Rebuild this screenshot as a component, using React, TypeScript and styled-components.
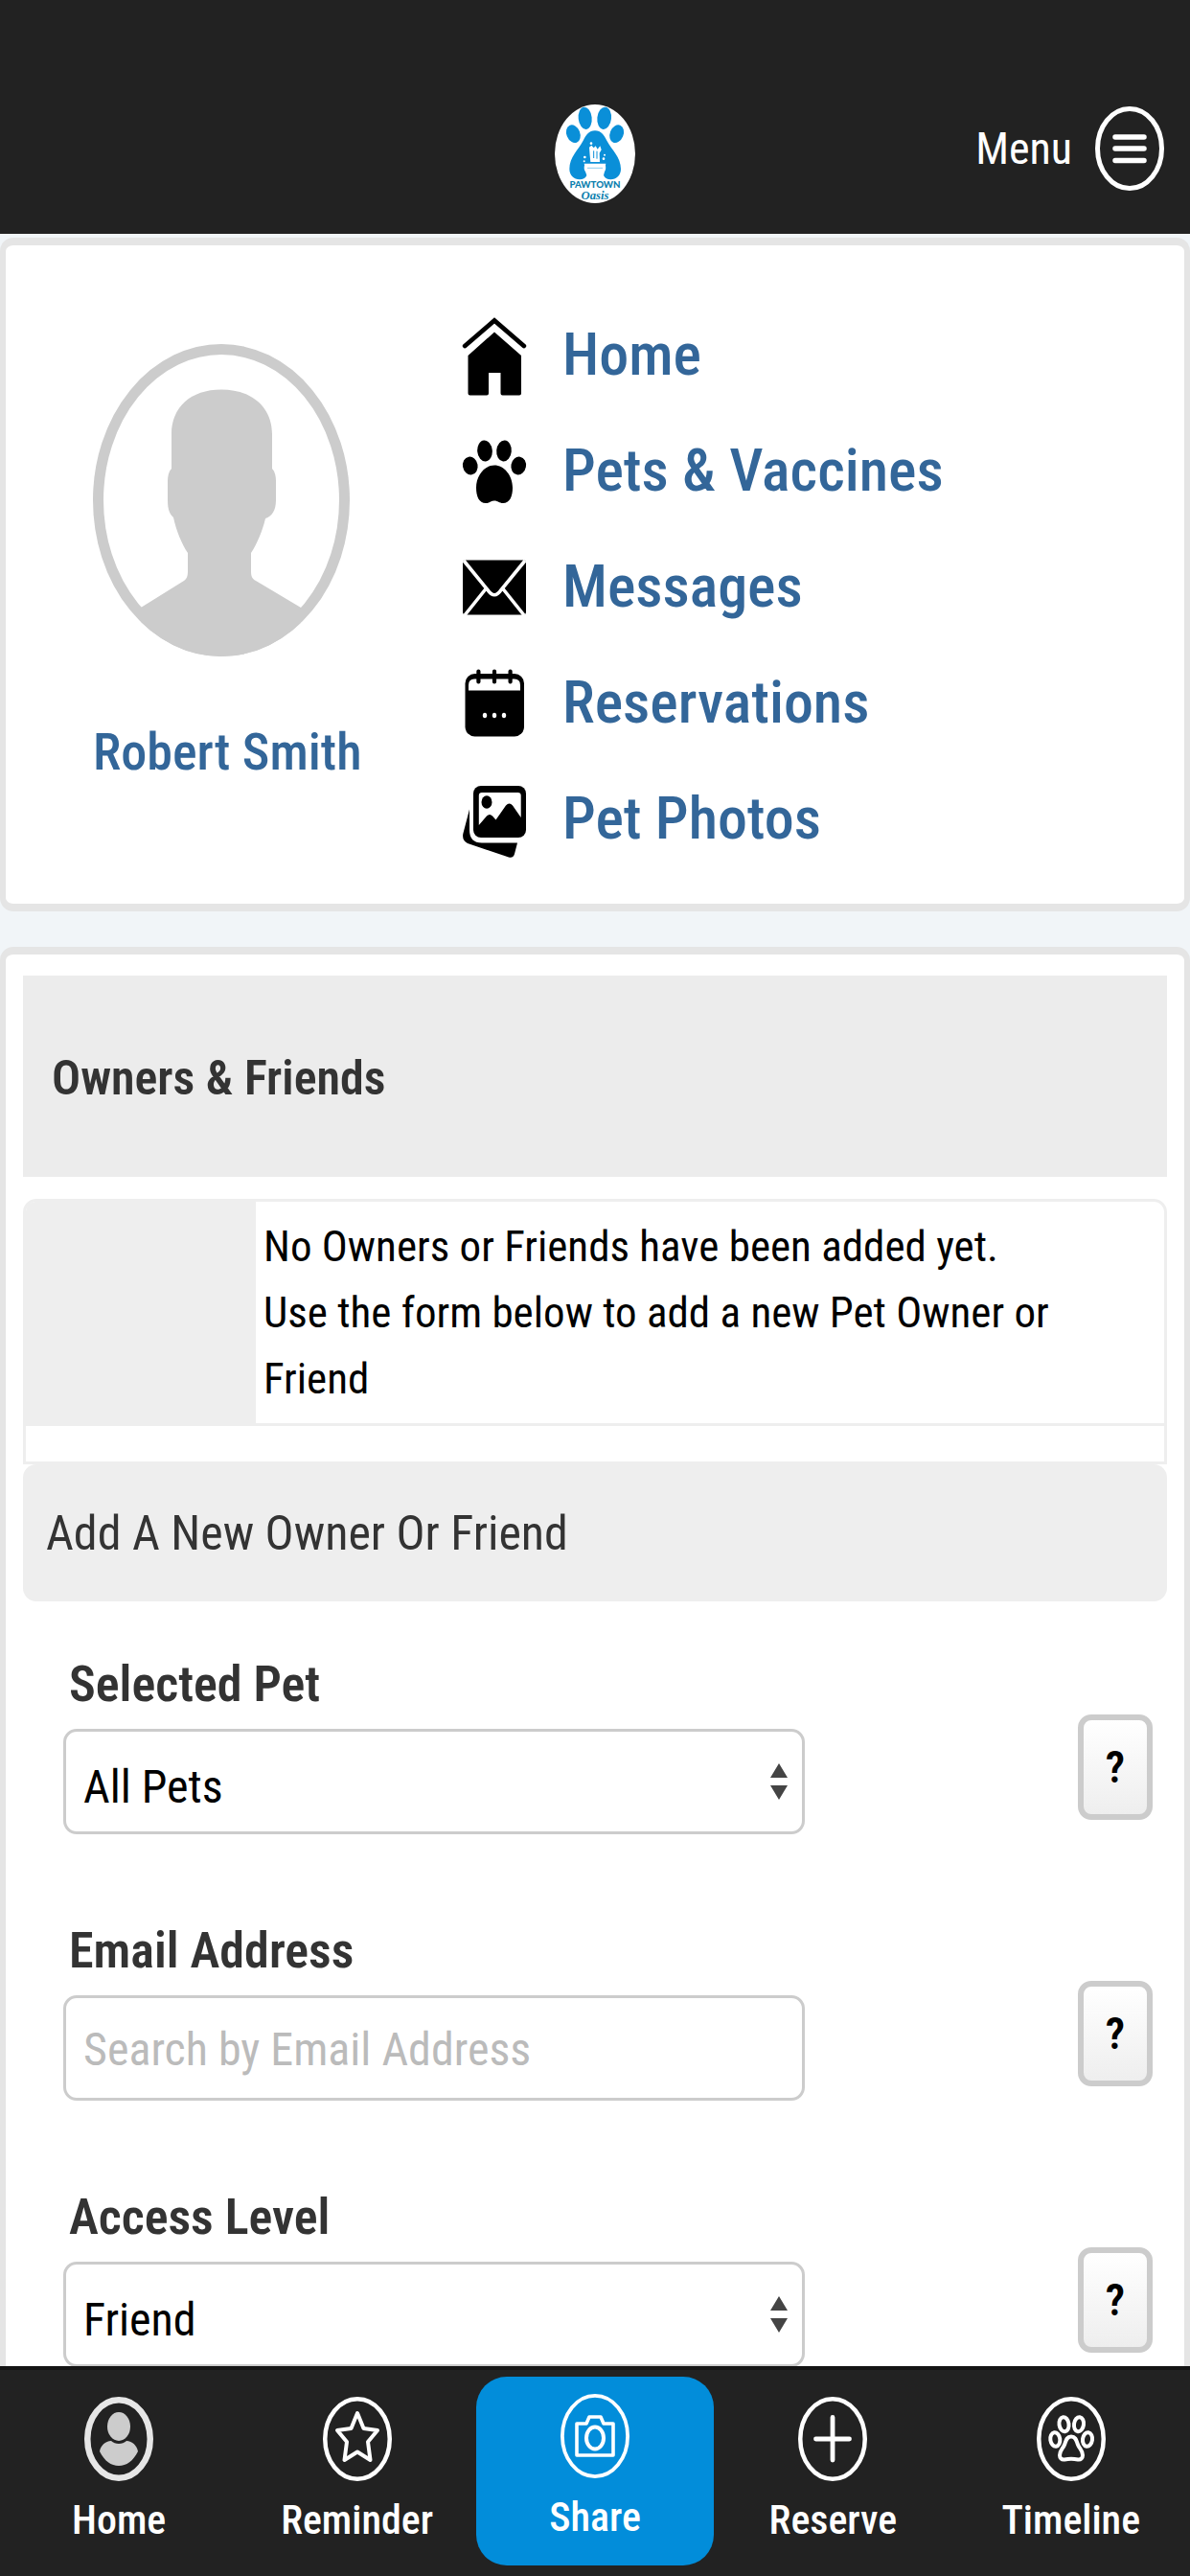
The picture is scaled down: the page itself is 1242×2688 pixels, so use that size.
import React from 'react';
import styled, { createGlobalStyle } from 'styled-components';

const GlobalStyle = createGlobalStyle`
  *, *::before, *::after { box-sizing: border-box; }
  body {
    margin: 0;
    background: #f1f5f8;
    color: #000;
    font-family: "Roboto Condensed", Roboto, "Liberation Sans", sans-serif;
  }
  button, input, select { font-family: inherit; }
`;

const Page = styled.div`
  display: flex;
  flex-direction: column;
  min-height: 100vh;
`;

/* Top bar */

const TopBar = styled.header`
  display: grid;
  grid-template-columns: 1fr auto 1fr;
  align-items: start;
  height: 244px;
  padding: 109px 27px 0;
  background: #222;
`;

const LogoLink = styled.a`
  display: block;
  grid-column: 2;
  line-height: 0;
`;

const MenuButton = styled.button`
  display: flex;
  align-items: center;
  justify-self: end;
  gap: 24px;
  padding: 2px 0 0;
  border: 0;
  background: none;
  color: #fff;
  font-size: 46px;
  line-height: 60px;
  cursor: pointer;
`;

/* Cards */

const Card = styled.section`
  border: solid #e5e5e5;
  border-width: 8px 6px;
  border-radius: 14px;
  background: #fff;
`;

const ProfileCard = styled(Card)`
  display: flex;
  align-items: flex-start;
  gap: 110px;
  margin-top: 4px;
  padding: 53px 24px 29px 91px;
`;

const Profile = styled.a`
  display: flex;
  flex-direction: column;
  align-items: flex-start;
  gap: 70px;
  width: 276px;
  padding-top: 50px;
  color: #369;
  font-size: 54px;
  font-weight: 500;
  line-height: 60px;
  text-decoration: none;
  white-space: nowrap;
`;

const NavList = styled.ul`
  margin: 0;
  padding: 0;
  list-style: none;
`;

const NavLink = styled.a`
  display: flex;
  align-items: center;
  gap: 38px;
  height: 121px;
  color: #369;
  font-size: 62px;
  font-weight: 500;
  text-decoration: none;
`;

const OwnersCard = styled(Card)`
  flex: 1;
  margin-top: 37px;
  padding: 22px 18px 200px;
`;

const CardTitle = styled.h1`
  display: flex;
  align-items: center;
  height: 210px;
  margin: 0 0 23px;
  padding: 4px 30px 0;
  background: #ececec;
  color: #333;
  font-size: 50px;
  font-weight: 600;
`;

const Notice = styled.div`
  border: 3px solid #eee;
  border-radius: 14px 14px 0 0;
`;

const NoticeRow = styled.div`
  display: grid;
  grid-template-columns: 240px 1fr;
  border-bottom: 3px solid #eee;
`;

const NoticeMark = styled.div`
  border-radius: 10px 0 0 0;
  background: #eee;
`;

const NoticeText = styled.p`
  margin: 0;
  padding: 12px 48px 12px 8px;
  font-size: 45px;
  line-height: 69px;
`;

const NoticeFoot = styled.div`
  height: 37px;
`;

const FormTitle = styled.h2`
  display: flex;
  align-items: center;
  height: 143px;
  margin: 0;
  padding: 0 24px;
  border-radius: 14px;
  background: #eee;
  color: #333;
  font-size: 50px;
  font-weight: 400;
`;

const Form = styled.form`
  display: flex;
  flex-direction: column;
  gap: 92px;
  padding: 57px 15px 0 42px;
`;

const Field = styled.div`
  display: flex;
  align-items: flex-end;
  justify-content: space-between;
  gap: 24px;
`;

const FieldMain = styled.div`
  flex: 0 1 774px;
`;

const Label = styled.label`
  display: block;
  margin-bottom: 16px;
  padding-left: 6px;
  color: #333;
  font-size: 52px;
  font-weight: 600;
  line-height: 60px;
`;

const TextInput = styled.input`
  display: block;
  width: 100%;
  height: 110px;
  padding: 2px 19px 0 18px;
  border: 3px solid #ccc;
  border-radius: 14px;
  background: #fff;
  color: #000;
  font-size: 48px;
  &::placeholder { color: #bbb; opacity: 1; }
`;

const SelectWrap = styled.div`
  position: relative;
`;

const Select = styled.select`
  display: block;
  width: 100%;
  height: 110px;
  padding: 10px 60px 0 18px;
  border: 3px solid #ccc;
  border-radius: 14px;
  background: #fff;
  color: #000;
  font-size: 48px;
  appearance: none;
`;

const SelectArrows = styled.svg`
  position: absolute;
  top: 36px;
  right: 18px;
  pointer-events: none;
`;

const HelpButton = styled.button`
  flex: none;
  width: 78px;
  height: 110px;
  margin-bottom: 15px;
  padding: 0;
  border: 6px solid #ccc;
  border-radius: 14px;
  background: linear-gradient(#fff, #eee);
  color: #000;
  font-size: 46px;
  font-weight: 600;
  cursor: pointer;
`;

/* Bottom bar */

const TabBar = styled.nav`
  position: fixed;
  right: 0;
  bottom: 0;
  left: 0;
  display: grid;
  grid-template-columns: repeat(5, 1fr);
  height: 219px;
  padding: 7px 0 11px;
  border-top: 4px solid #141414;
  background: #222;
`;

const Tab = styled.a<{ $primary?: boolean }>`
  display: flex;
  flex-direction: column;
  align-items: center;
  gap: 16px;
  padding-top: ${(p) => (p.$primary ? 18 : 21)}px;
  border-radius: 32px;
  background: ${(p) => (p.$primary ? '#028dda' : 'transparent')};
  color: #fff;
  font-size: 42px;
  font-weight: 500;
  line-height: 50px;
  text-decoration: none;
`;

/* Drawings */

const Logo = () => (
  <svg width="84" height="103" viewBox="0 0 252 309" role="img" aria-label="Pawtown Oasis">
    <ellipse cx="126" cy="154.500" rx="126" ry="154.500" fill="#fff" />
    <g fill="#0a8fd8">
      <ellipse cx="95" cy="43" rx="21" ry="35" transform="rotate(-6 95 43)" />
      <ellipse cx="155" cy="43" rx="22" ry="35" transform="rotate(6 155 43)" />
      <ellipse cx="58" cy="92" rx="21" ry="29" transform="rotate(-22 58 92)" />
      <ellipse cx="194" cy="92" rx="21" ry="29" transform="rotate(22 194 92)" />
      <path d="M126 82C107 82 98 96 89 113C74 142 46 164 46 202C46 222 60 235 78 235C88 235 96 231 100 222L96 210C91 206 91 190 96 186H156C161 190 161 206 156 210L153 222C157 231 165 235 175 235C193 235 207 222 207 202C207 164 178 142 163 113C154 96 145 82 126 82Z" />
    </g>
    <g fill="#fff">
      <path d="M108 134L115 128L122 136L128 130L134 140L142 130L146 142L140 152L141 180H112L110 160Z" />
      <circle cx="114" cy="122" r="4" />
      <circle cx="94" cy="165" r="4" />
      <circle cx="153" cy="170" r="4" />
      <circle cx="92" cy="178" r="3" />
      <circle cx="156" cy="158" r="3" />
      <path d="M92 185H160L154 212H98Z" />
    </g>
    <path d="M122 145V168M132 146V170" stroke="#0a8fd8" strokeWidth="3" />
    <path d="M102 199H150" stroke="#8fcdee" strokeWidth="3" />
    <text x="126" y="262" textAnchor="middle" fontSize="29" fontWeight="900" fontFamily="Lato, sans-serif" fill="#0c7fae">PAWTOWN</text>
    <text x="126" y="296" textAnchor="middle" fontSize="38" fontWeight="700" fontStyle="italic" fontFamily="Liberation Serif, serif" fill="#0c7fae">Oasis</text>
  </svg>
);

const MenuIcon = () => (
  <svg width="72" height="88" viewBox="0 0 72 88" fill="none" stroke="#fff" strokeLinecap="round" aria-hidden="true">
    <ellipse cx="36" cy="44" rx="33.500" ry="41.500" strokeWidth="5" />
    <path d="M21 32H51M21 44H51M21 56.500H51" strokeWidth="5.500" />
  </svg>
);

const Avatar = () => (
  <svg width="268" height="326" viewBox="0 0 268 326" aria-hidden="true">
    <defs>
      <clipPath id="avatar-round"><ellipse cx="134" cy="163" rx="134" ry="163" /></clipPath>
    </defs>
    <ellipse cx="134" cy="163" rx="128.500" ry="157.500" fill="#fff" stroke="#ccc" strokeWidth="11" />
    <path
      clipPath="url(#avatar-round)"
      fill="#ccc"
      d="M134 47.500C166 47.500 187 66 187 94V130C190 133 191 138 191 143V163C191 173 187 180 180 182C177 195 171 209 165 218V237C165 242 166 245 170 247L217 275V326H50V275L95 247C98 245 99 242 99 237V218C93 209 87 195 84 181C80 177 78 173 78 163V143C78 138 79 133 82 130V94C82 66 102 47.500 134 47.500Z"
    />
  </svg>
);

const NavIcon = ({ children }: { children: React.ReactNode }) => (
  <svg width="66" height="84" viewBox="0 0 66 84" overflow="visible" aria-hidden="true">{children}</svg>
);

const HomeIcon = () => (
  <NavIcon>
    <path d="M2.200 33L33 6.500L63.800 33" fill="none" stroke="#000" strokeWidth="4.800" strokeLinecap="round" />
    <path d="M33 18.500L61 43V82.500Q61 84.500 59 84.500H41.500Q39.500 84.500 39.500 82.500V61H27V82.500Q27 84.500 25 84.500H7.500Q5.500 84.500 5.500 82.500V43Z" />
  </NavIcon>
);

const PawIcon = () => (
  <NavIcon>
    <ellipse cx="23" cy="21.500" rx="7.800" ry="11" transform="rotate(-5 23 21.500)" />
    <ellipse cx="43" cy="21.500" rx="7.800" ry="11" transform="rotate(5 43 21.500)" />
    <ellipse cx="7.800" cy="37" rx="7.800" ry="9.500" transform="rotate(-10 7.800 37)" />
    <ellipse cx="58.200" cy="37" rx="7.800" ry="9.500" transform="rotate(10 58.200 37)" />
    <path d="M33 36.500C43 36.500 52 47 52 60C52 69 49 76 42 76C38 76 36.500 73.500 33 73.500C29.500 73.500 28 76 24 76C17 76 14 69 14 60C14 47 23 36.500 33 36.500Z" />
  </NavIcon>
);

const MailIcon = () => (
  <NavIcon>
    <rect x="0" y="14.500" width="66" height="57" rx="3" />
    <path d="M1 15L26 45.500Q33 56 40 45.500L65 15M24 44.500L2 72M42 44.500L64 72" fill="none" stroke="#fff" strokeWidth="3.600" />
  </NavIcon>
);

const CalendarIcon = () => (
  <NavIcon>
    <rect x="2.500" y="12" width="61.500" height="65.500" rx="10" />
    <path d="M6 29.500V24Q6 17.500 12 17.500H54Q60 17.500 60 24V29.500Z" fill="#fff" />
    <path d="M16.400 9.500V20.500M33 9.500V20.500M49.600 9.500V20.500" stroke="#000" strokeWidth="4.200" strokeLinecap="round" />
    <g fill="#fff">
      <ellipse cx="23" cy="55.500" rx="2.200" ry="2.800" />
      <ellipse cx="33" cy="55.500" rx="2.200" ry="2.800" />
      <ellipse cx="43" cy="55.500" rx="2.200" ry="2.800" />
    </g>
  </NavIcon>
);

const PhotosIcon = () => (
  <NavIcon>
    <path d="M7 32.500L0.300 58Q-1 65 5 68L48 82.500Q53 83.500 54 79L57 67.500H20Q7 67.500 7 54Z" />
    <rect x="11" y="8" width="55" height="54" rx="8" />
    <path d="M16.800 18Q16.800 15 20 15H57.500Q60.700 15 60.700 18V41L52 28.500Q48.500 24.500 45 28.500L34.500 43.500L31 39.500Q28 36.500 25 39.500L16.800 49Z" fill="#fff" />
    <ellipse cx="25" cy="25" rx="5.500" ry="6.800" />
  </NavIcon>
);

const TabIcon = ({ ring = '#fff', ringWidth = 4.5, children }: { ring?: string; ringWidth?: number; children: React.ReactNode }) => (
  <svg width="72" height="88" viewBox="0 0 72 88" fill="none" stroke="#fff" strokeWidth="4" strokeLinejoin="round" strokeLinecap="round" aria-hidden="true">
    <ellipse cx="36" cy="44" rx={36 - ringWidth / 2} ry={44 - ringWidth / 2} stroke={ring} strokeWidth={ringWidth} />
    {children}
  </svg>
);

const tabs = [
  {
    label: 'Home',
    icon: (
      <TabIcon ring="#e6e6e6" ringWidth={6.5}>
        <g fill="#ccc" stroke="none">
          <ellipse cx="36" cy="31" rx="12" ry="15" />
          <path d="M16 57C17 51 22 46 28 46C32 50 40 50 44 46C50 46 55 51 56 57C51 67 44 72 36 72C28 72 21 67 16 57Z" />
        </g>
      </TabIcon>
    ),
  },
  {
    label: 'Reminder',
    icon: (
      <TabIcon>
        <path d="M36 17L42.500 33L57 35L47 47L49.500 66L36 57.500L22.500 66L25 47L15 35L29.500 33Z" />
      </TabIcon>
    ),
  },
  {
    label: 'Share',
    primary: true,
    icon: (
      <TabIcon ringWidth={3.8}>
        <path d="M17 31H27L30 24H42L45 31H55V64H17Z" strokeWidth="3.600" />
        <ellipse cx="36" cy="46" rx="9" ry="11.500" />
      </TabIcon>
    ),
  },
  {
    label: 'Reserve',
    icon: (
      <TabIcon>
        <path d="M36 21.500V66M18.500 44H53.500" strokeWidth="4.800" />
      </TabIcon>
    ),
  },
  {
    label: 'Timeline',
    icon: (
      <TabIcon>
        <ellipse cx="28.500" cy="28.700" rx="5" ry="7.600" transform="rotate(-8 28.500 28.700)" />
        <ellipse cx="44" cy="28.700" rx="5" ry="7.600" transform="rotate(8 44 28.700)" />
        <ellipse cx="19.300" cy="44.500" rx="5" ry="7.300" transform="rotate(-8 19.300 44.500)" />
        <ellipse cx="53" cy="44.500" rx="5" ry="7.300" transform="rotate(8 53 44.500)" />
        <path d="M36 41.500C31 41.500 30.500 46 29 50C27.500 54 24 56 24 61C24 64 26 66 29 65.500C34 64.500 38 64.500 43 65.500C46 66 48 64 48 61C48 56 44.500 54 43 50C41.500 46 41 41.500 36 41.500Z" />
      </TabIcon>
    ),
  },
];

const links = [
  { label: 'Home', icon: <HomeIcon /> },
  { label: 'Pets & Vaccines', icon: <PawIcon /> },
  { label: 'Messages', icon: <MailIcon /> },
  { label: 'Reservations', icon: <CalendarIcon /> },
  { label: 'Pet Photos', icon: <PhotosIcon /> },
];

function FormField({ id, label, children }: { id: string; label: string; children: React.ReactNode }) {
  return (
    <Field>
      <FieldMain>
        <Label htmlFor={id}>{label}</Label>
        {children}
      </FieldMain>
      <HelpButton type="button">?</HelpButton>
    </Field>
  );
}

function SelectBox({ id, options }: { id: string; options: string[] }) {
  return (
    <SelectWrap>
      <Select id={id}>
        {options.map((option) => <option key={option}>{option}</option>)}
      </Select>
      <SelectArrows width="18" height="38" viewBox="0 0 18 38" fill="#444" aria-hidden="true">
        <path d="M9 0L18 15H0ZM9 38L0 23H18Z" />
      </SelectArrows>
    </SelectWrap>
  );
}

export default function App() {
  return (
    <Page>
      <GlobalStyle />
      <TopBar>
        <LogoLink href="#"><Logo /></LogoLink>
        <MenuButton type="button">
          Menu
          <MenuIcon />
        </MenuButton>
      </TopBar>

      <ProfileCard>
        <Profile href="#profile">
          <Avatar />
          Robert Smith
        </Profile>
        <NavList>
          {links.map(({ label, icon }) => (
            <li key={label}>
              <NavLink href="#">{icon}{label}</NavLink>
            </li>
          ))}
        </NavList>
      </ProfileCard>

      <OwnersCard>
        <CardTitle>Owners &amp; Friends</CardTitle>
        <Notice>
          <NoticeRow>
            <NoticeMark />
            <NoticeText>
              No Owners or Friends have been added yet.
              <br />
              Use the form below to add a new Pet Owner or Friend
            </NoticeText>
          </NoticeRow>
          <NoticeFoot />
        </Notice>
        <FormTitle>Add A New Owner Or Friend</FormTitle>
        <Form>
          <FormField id="pet" label="Selected Pet">
            <SelectBox id="pet" options={['All Pets']} />
          </FormField>
          <FormField id="email" label="Email Address">
            <TextInput id="email" type="email" placeholder="Search by Email Address" />
          </FormField>
          <FormField id="access" label="Access Level">
            <SelectBox id="access" options={['Friend']} />
          </FormField>
        </Form>
      </OwnersCard>

      <TabBar>
        {tabs.map(({ label, icon, primary }) => (
          <Tab key={label} href="#" $primary={primary}>
            {icon}
            {label}
          </Tab>
        ))}
      </TabBar>
    </Page>
  );
}
